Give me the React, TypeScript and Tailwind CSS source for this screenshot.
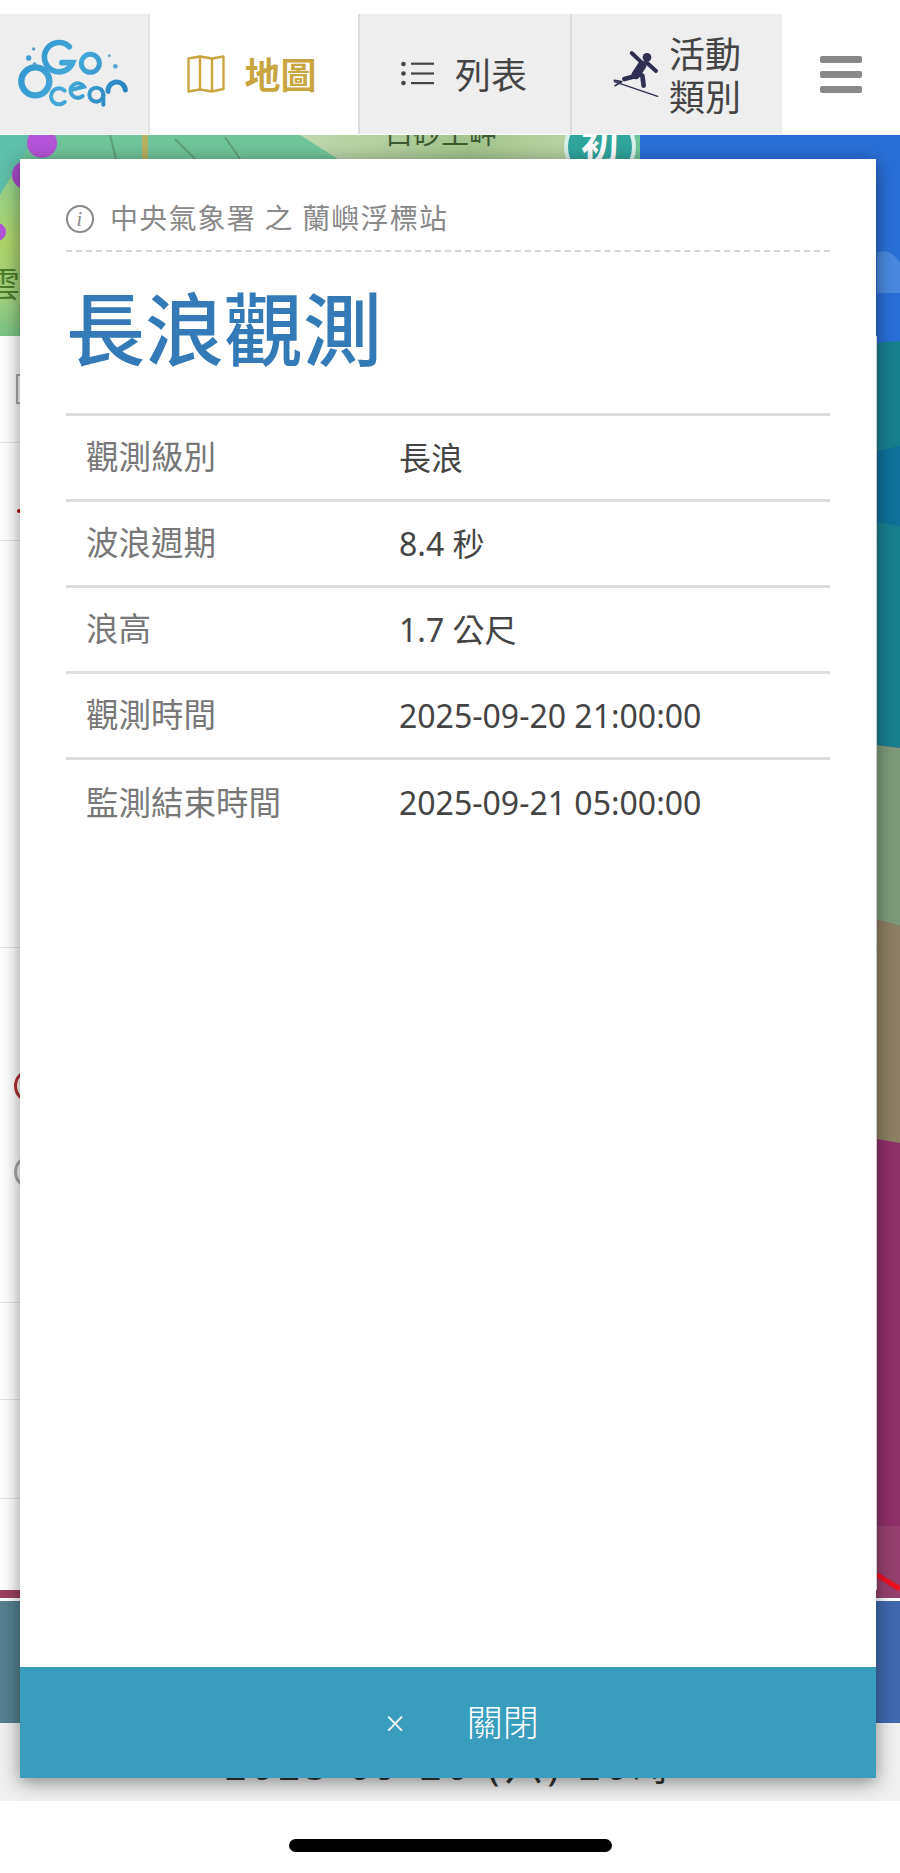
import React from "react";

const font = { fontFamily: '"Noto Sans", "Noto Sans CJK TC", sans-serif' };

function Logo() {
  const s = "url(#lg)";
  return (
    <svg width="125" height="80" viewBox="0 0 375 240" fill="none" className="shrink-0">
      <defs>
        <linearGradient id="lg" gradientUnits="userSpaceOnUse" x1="30" y1="30" x2="340" y2="200">
          <stop offset="0" stopColor="#2f93cc" />
          <stop offset="0.5" stopColor="#45a9d8" />
          <stop offset="1" stopColor="#2580bc" />
        </linearGradient>
      </defs>
      <g stroke={s} strokeLinecap="round">
        <path d="M172 38 A44 44 0 1 0 182 86 L150 86" strokeWidth="17" />
        <circle cx="235" cy="88" r="27" strokeWidth="15" />
        <circle cx="70" cy="142" r="42" strokeWidth="19" />
        <path d="M158 170 A24 24 0 1 0 158 204" strokeWidth="12" />
        <path d="M176 168 L216 158 A22 22 0 1 0 212 186" strokeWidth="12" />
        <circle cx="253" cy="182" r="21" strokeWidth="12" />
        <path d="M274 180 V212" strokeWidth="12" />
        <path d="M288 172 A26 26 0 0 1 340 168" strokeWidth="15" />
      </g>
      <circle cx="50" cy="72" r="8" fill="#3f9fd2" />
      <circle cx="65" cy="45" r="5" fill="#5a9fc8" />
      <circle cx="68" cy="91" r="6" fill="#5a9fc8" />
      <circle cx="292" cy="65" r="4" fill="#5a9fc8" />
      <circle cx="310" cy="97" r="7" fill="#5aa5cf" />
    </svg>
  );
}

function MapIcon() {
  return (
    <svg width="38" height="38" viewBox="0 0 38 38" fill="none" stroke="#c9a53f" strokeWidth="2.4" strokeLinejoin="round">
      <path d="M1.5 3.5 L13 1.5 L25 3.5 L36.5 1.5 V34 L25 36.5 L13 34.5 L1.5 36.5 Z" />
      <path d="M13 1.5 V34.5 M25 3.5 V36.5" />
    </svg>
  );
}

function ListIcon() {
  return (
    <svg width="34" height="26" viewBox="0 0 34 26" fill="#444">
      <circle cx="2.5" cy="3" r="2.3" />
      <circle cx="2.5" cy="12.5" r="2.3" />
      <circle cx="2.5" cy="22" r="2.3" />
      <rect x="10" y="1.6" width="23" height="2.2" />
      <rect x="10" y="11.4" width="23" height="2.2" />
      <rect x="10" y="21" width="23" height="2.2" />
    </svg>
  );
}

function Surfer() {
  return (
    <svg width="50" height="50" viewBox="36 30 150 150" fill="none" stroke="#2f2f52" strokeLinecap="round" strokeLinejoin="round" className="shrink-0">
      <circle cx="138" cy="55" r="13" fill="#2f2f52" stroke="none" />
      <path d="M128 76 L92 42" strokeWidth="12" />
      <path d="M136 70 L165 96" strokeWidth="12" />
      <path d="M124 78 L104 108" strokeWidth="26" />
      <path d="M102 112 L70 120" strokeWidth="14" />
      <path d="M108 104 L124 110 L128 140" strokeWidth="14" />
      <path d="M40 128 L170 172" strokeWidth="4" />
      <path d="M40 124 L62 128 M42 140 L62 128" strokeWidth="5" />
    </svg>
  );
}

function Info() {
  return (
    <span className="flex h-[28px] w-[28px] shrink-0 items-center justify-center rounded-full border-2 border-[#888] text-[20px] italic leading-none text-[#888]" style={{ fontFamily: '"Liberation Serif", serif' }}>
      i
    </span>
  );
}

function MapStrip() {
  return (
    <svg width="900" height="201" viewBox="0 0 900 201" className="block">
      <defs>
        <linearGradient id="lv" x1="0" y1="0" x2="1" y2="0">
          <stop offset="0" stopColor="#c0d8b0" />
          <stop offset="0.6" stopColor="#a4c48c" />
          <stop offset="1" stopColor="#bcd4a8" />
        </linearGradient>
        <linearGradient id="lf" x1="0" y1="0" x2="0" y2="1">
          <stop offset="0" stopColor="#8fd094" />
          <stop offset="0.45" stopColor="#b0d46c" />
          <stop offset="0.8" stopColor="#a0d080" />
          <stop offset="1" stopColor="#78c488" />
        </linearGradient>
      </defs>
      <rect width="900" height="201" fill="#2a6fd8" />
      <path d="M877 118 Q890 112 900 128 V158 H877 Z" fill="#4a88e0" />
      <rect width="640" height="201" fill="#6fc49a" />
      <rect x="0" y="30" width="22" height="171" fill="url(#lf)" />
      <path d="M0 0 H36 L0 60 Z" fill="#5fbfa8" />
      <path d="M300 0 H582 V24 H338 Z" fill="url(#lv)" />
      <path d="M145 0 V24" stroke="#b8b060" strokeWidth="6" />
      <path d="M110 0 L116 24 M225 2 L240 24 M175 4 L195 24" stroke="#5f9f78" strokeWidth="2" />
      <circle cx="42" cy="8" r="15" fill="#b454d8" />
      <circle cx="26" cy="40" r="14" fill="#a94ccc" />
      <circle cx="-3" cy="97" r="9" fill="#b454d8" />
      <text x="-14" y="162" fontSize="34" fill="#4d7a2c">雲</text>
      <text x="385" y="9" fontSize="28" fill="#3f5a30">白砂土岬</text>
      <circle cx="600" cy="12" r="34" fill="#2fa59c" stroke="#d8f0ea" strokeWidth="4" />
      <text x="600" y="24" fontSize="38" fontWeight="700" fill="#fff" textAnchor="middle">初</text>
    </svg>
  );
}

function Bands() {
  return (
    <svg width="23" height="1265" viewBox="0 0 23 1265" preserveAspectRatio="none" className="block shrink-0">
      <rect width="23" height="1265" fill="#8e3068" />
      <rect width="23" height="12" fill="#2a6fd8" />
      <path d="M0 7 L23 5 V412 L0 409 Z" fill="#17808f" />
      <path d="M0 115 L23 110 V190 L0 186 Z" fill="#0d7199" />
      <path d="M0 409 L23 412 V590 L0 584 Z" fill="#7d9a7a" />
      <path d="M0 584 L23 590 V807 L0 803 Z" fill="#8d7f65" />
      <path d="M0 1190 L23 1190 V1262 H0 Z" fill="#95406e" />
      <path d="M0 1239 L23 1253" stroke="#ee1020" strokeWidth="5" />
      <rect y="1262" width="23" height="3" fill="#fff" />
    </svg>
  );
}

function LeftList() {
  return (
    <div className="flex flex-1 flex-col bg-white">
      <div className="flex h-[107px] items-center border-b border-[#e5e5e5] pl-4">
        <span className="h-[30px] w-[6px] border-2 border-[#aaa]" />
      </div>
      <div className="h-[98px] border-b border-[#e5e5e5] pt-[66px] pl-[17px]">
        <div className="h-1 w-1 rounded-full bg-red-700" />
      </div>
      <div className="h-[407px] border-b border-[#e5e5e5]" />
      <div className="flex h-[355px] flex-col gap-[52px] border-b border-[#e5e5e5] pt-[121px] pl-[14px]">
        <span className="h-[34px] w-[34px] rounded-full border-[3px] border-[#b03030]" />
        <span className="h-[34px] w-[34px] rounded-full border-[3px] border-[#aaa]" />
      </div>
      <div className="h-[97px] border-b border-[#e5e5e5]" />
      <div className="h-[99px] border-b border-[#e5e5e5]" />
      <div className="h-[91px]" />
      <div className="h-[8px] bg-[#9a4060]" />
      <div className="h-[3px] bg-white" />
    </div>
  );
}

const rows = [
  ["觀測級別", "長浪"],
  ["波浪週期", "8.4 秒"],
  ["浪高", "1.7 公尺"],
  ["觀測時間", "2025-09-20 21:00:00"],
  ["監測結束時間", "2025-09-21 05:00:00"],
];

export default function App() {
  return (
    <div className="relative h-[1873px] w-[900px] overflow-hidden bg-white" style={font}>
      <header className="flex h-[135px] items-stretch bg-white pt-[14px] pb-px">
        <div className="flex w-[148px] items-center justify-center bg-[#eeeeee]">
          <Logo />
        </div>
        <div className="flex w-[210px] items-center justify-center gap-[19px] border-l-2 border-[#e2e2e2] bg-white pr-[4px]">
          <MapIcon />
          <span className="pt-[3px] text-[36px] font-semibold leading-none text-[#c9a53f]">地圖</span>
        </div>
        <div className="flex w-[212px] items-center justify-center gap-[20px] border-l-2 border-[#dcdcdc] bg-[#eeeeee] pr-[2px] text-[#444]">
          <ListIcon />
          <span className="pt-[3px] text-[36px] leading-none">列表</span>
        </div>
        <div className="flex w-[212px] items-center justify-center gap-[6px] border-l-2 border-[#dcdcdc] bg-[#eeeeee] text-[#444]">
          <Surfer />
          <span className="w-[72px] pt-[3px] text-[36px] leading-[43px]">活動類別</span>
        </div>
        <div className="flex flex-1 flex-col items-center justify-center gap-[8px]">
          <span className="h-[7px] w-[42px] rounded-[2px] bg-[#888]" />
          <span className="h-[7px] w-[42px] rounded-[2px] bg-[#888]" />
          <span className="h-[7px] w-[42px] rounded-[2px] bg-[#888]" />
        </div>
      </header>

      <MapStrip />
      <div className="flex h-[1265px]">
        <LeftList />
        <Bands />
      </div>
      <div className="h-[122px] bg-gradient-to-r from-[#55808f] to-[#4169b0]" />
      <div className="flex h-[78px] items-end justify-center bg-[#f0f0f0] pb-[13px] text-[38px] leading-[46px] tracking-[5px] text-[#333]">
        2025-09-20 (六) 20時
      </div>
      <div className="flex h-[72px] justify-center pt-[38px]">
        <span className="h-[13px] w-[323px] rounded-full bg-black" />
      </div>

      <div className="absolute top-[159px] left-[20px] flex h-[1619px] w-[856px] flex-col bg-white shadow-[0_4px_18px_rgba(0,0,0,0.45)]">
        <div className="flex-1 px-[46px]">
          <div className="flex h-[93px] items-end gap-[16px] border-b-2 border-dashed border-[#d4d4d4] pb-[17px] text-[28px] leading-[28px] tracking-[1.2px] text-[#888]">
            <Info />
            <span className="pb-px">中央氣象署 之 蘭嶼浮標站</span>
          </div>
          <h1 className="flex h-[161px] items-center pb-[6px] text-[79px] font-medium leading-none text-[#337ab7]">長浪觀測</h1>
          <div className="border-t-[3px] border-[#dedede]">
            {rows.map(([k, v], i) => (
              <div key={k} className={`flex h-[86px] items-center ${i < 4 ? "border-b-[3px] border-[#dedede]" : ""}`}>
                <span className="w-[333px] pl-[20px] text-[32.5px] text-[#777]">{k}</span>
                <span className="text-[32px] text-[#444]">{v}</span>
              </div>
            ))}
          </div>
        </div>
        <div className="flex h-[111px] items-center justify-center gap-[62px] bg-[#399dbd] pl-[28px] text-[36px] text-white">
          <span className="text-[34px] font-light leading-none">×</span>
          <span className="font-light leading-none">關閉</span>
        </div>
      </div>
    </div>
  );
}
